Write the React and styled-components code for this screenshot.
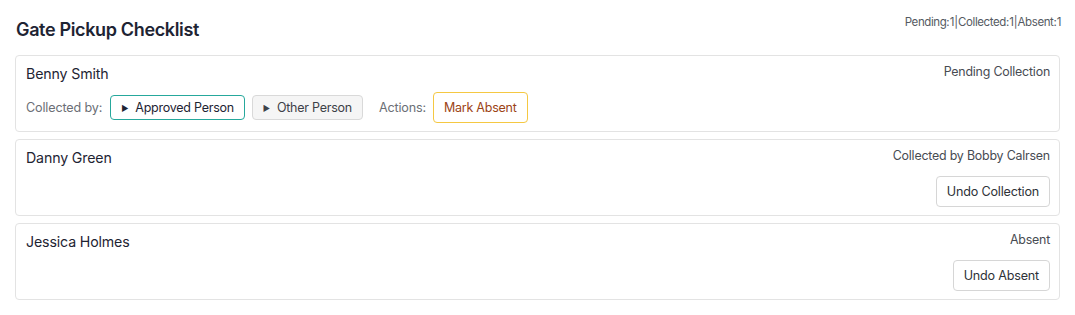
import React from 'react';
import styled, { createGlobalStyle } from 'styled-components';

const GlobalStyle = createGlobalStyle`
  * { box-sizing: border-box; }
  body {
    margin: 0;
    background: #ffffff;
    font-family: Inter, "Liberation Sans", sans-serif;
    color: #1e2433;
  }
`;

const students = [
  { name: 'Benny Smith', status: 'pending' },
  { name: 'Danny Green', status: 'collected', by: 'Bobby Calrsen' },
  { name: 'Jessica Holmes', status: 'absent' },
];

export default function App() {
  const counts = {
    pending: students.filter((s) => s.status === 'pending').length,
    collected: students.filter((s) => s.status === 'collected').length,
    absent: students.filter((s) => s.status === 'absent').length,
  };

  return (
    <>
      <GlobalStyle />
      <Page>
        <Header>
          <Title>Gate Pickup Checklist</Title>
          <Stats>
            Pending: {counts.pending} | Collected: {counts.collected} | Absent: {counts.absent}
          </Stats>
        </Header>
        <List>
          {students.map((s) => (
            <Card key={s.name}>
              <Left>
                <Name>{s.name}</Name>
                {s.status === 'pending' && (
                  <ActionRow>
                    <Label>Collected by:</Label>
                    <PickButton $approved>
                      <Arrow>▶</Arrow>Approved Person
                    </PickButton>
                    <PickButton>
                      <Arrow>▶</Arrow>Other Person
                    </PickButton>
                    <Label $spaced>Actions:</Label>
                    <AbsentButton>Mark Absent</AbsentButton>
                  </ActionRow>
                )}
              </Left>
              <Right>
                <Status>
                  {s.status === 'pending' && 'Pending Collection'}
                  {s.status === 'collected' && `Collected by ${s.by}`}
                  {s.status === 'absent' && 'Absent'}
                </Status>
                {s.status === 'collected' && <UndoButton>Undo Collection</UndoButton>}
                {s.status === 'absent' && <UndoButton>Undo Absent</UndoButton>}
              </Right>
            </Card>
          ))}
        </List>
      </Page>
    </>
  );
}

const Page = styled.div`
  padding: 15px;
`;

const Header = styled.div`
  display: flex;
  justify-content: space-between;
  align-items: flex-start;
  padding-left: 1px;
  margin-right: -1px;
  margin-bottom: 14px;
`;

const Title = styled.h1`
  margin: 4px 0 0;
  font-size: 18px;
  line-height: 22px;
  font-weight: 600;
  letter-spacing: -0.35px;
  color: #1e2433;
`;

const Stats = styled.div`
  font-size: 11.5px;
  line-height: 14px;
  color: #555a62;
  letter-spacing: -0.4px;
  word-spacing: -2.5px;
`;

const List = styled.div`
  display: flex;
  flex-direction: column;
  gap: 7px;
`;

const Card = styled.div`
  display: flex;
  justify-content: space-between;
  align-items: flex-start;
  border: 1px solid #e3e3e3;
  border-radius: 4px;
  padding: 7px 9px 8px 10px;
  min-height: 77px;
`;

const Left = styled.div`
  display: flex;
  flex-direction: column;
  gap: 7px;
`;

const Name = styled.div`
  font-size: 14.2px;
  line-height: 22px;
  letter-spacing: -0.15px;
  color: #1e2433;
`;

const ActionRow = styled.div`
  display: flex;
  align-items: center;
  gap: 7px;
  height: 31px;
`;

const Label = styled.span`
  font-size: 12.6px;
  color: #6b6f76;
  margin-left: ${(p) => (p.$spaced ? '9px' : '0')};
  margin-right: ${(p) => (p.$spaced ? '0' : '1px')};
  letter-spacing: -0.15px;
`;

const PickButton = styled.button`
  display: flex;
  align-items: center;
  height: 25px;
  padding: 0 10px;
  font-family: inherit;
  font-size: 12.5px;
  letter-spacing: -0.25px;
  color: ${(p) => (p.$approved ? '#1e2433' : '#3d4148')};
  background: ${(p) => (p.$approved ? '#ffffff' : '#f5f5f5')};
  border: 1px solid ${(p) => (p.$approved ? '#26a89c' : '#d9d9d9')};
  border-radius: 4px;
`;

const Arrow = styled.span`
  font-size: 8px;
  margin-right: 7px;
`;

const AbsentButton = styled.button`
  height: 31px;
  padding: 0 10px;
  font-family: inherit;
  font-size: 12.5px;
  letter-spacing: -0.25px;
  color: #9c4416;
  background: #ffffff;
  border: 1px solid #f5c842;
  border-radius: 4px;
`;

const Right = styled.div`
  display: flex;
  flex-direction: column;
  align-items: flex-end;
`;

const Status = styled.div`
  font-size: 12.4px;
  line-height: 16px;
  color: #474b52;
  letter-spacing: -0.2px;
  margin-top: 1px;
`;

const UndoButton = styled.button`
  margin-top: 12px;
  height: 31px;
  padding: 0 10px;
  font-family: inherit;
  font-size: 12.6px;
  letter-spacing: -0.2px;
  color: #2e3238;
  background: #ffffff;
  border: 1px solid #d6d6d6;
  border-radius: 4px;
`;
